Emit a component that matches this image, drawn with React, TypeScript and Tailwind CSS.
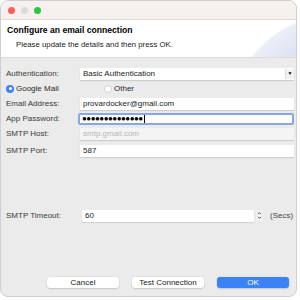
import { clsx } from 'clsx';

const font = "font-['Liberation_Sans','Helvetica',Arial,sans-serif]";

const Row = ({ label, children, className }: { label: string; children: React.ReactNode; className?: string }) => (
    <div className={clsx('h-[15px] flex items-center', className)}>
        <span className="w-[79px] pl-[5px] text-[8px] text-[#3a3a3a] whitespace-nowrap">{label}</span>
        {children}
    </div>
);

const Field = ({ value, disabled, focused }: { value: string; disabled?: boolean; focused?: boolean }) => (
    <div
        className={clsx(
            'h-[12px] flex items-center text-[8px] whitespace-nowrap overflow-hidden',
            focused
                ? 'ml-[-2px] w-[216px] border-2 border-[#86a6ea] rounded-[2px] bg-white px-[2px] text-black tracking-[-0.5px]'
                : 'w-[214px] px-[3px] shadow-[0_1px_1px_rgba(0,0,0,0.12)]',
            disabled ? 'bg-[#f4f4f4] text-[#b4b4b4]' : !focused && 'bg-white text-[#222]'
        )}
    >
        {value}
        {focused && <span className="w-px h-[9px] bg-black ml-px" />}
    </div>
);

const Radio = ({ label, checked }: { label: string; checked?: boolean }) => (
    <div className="flex items-center gap-[2px]">
        <span
            className={clsx(
                'w-[8px] h-[8px] rounded-full flex items-center justify-center',
                checked ? 'bg-[#3d82f6]' : 'bg-white border border-[#d0d0d0]'
            )}
        >
            {checked && <span className="w-[3px] h-[3px] rounded-full bg-white" />}
        </span>
        <span className="text-[8px] text-[#2a2a2a]">{label}</span>
    </div>
);

const App = () => {
    return (
        <div className={clsx('w-[300px] h-[300px] bg-white', font)}>
            <div className="w-[297px] h-[297px] rounded-[8px] border border-[#cfcfcf] overflow-hidden flex flex-col bg-[#ebebeb]">
                {/* Title bar */}
                <div className="h-[19px] flex-shrink-0 bg-[#f6f1ee] border-b border-[#dedad7] flex items-center gap-[6px] pl-[7px]">
                    <span className="w-[7px] h-[7px] rounded-full bg-[#fe5f57]" />
                    <span className="w-[7px] h-[7px] rounded-full bg-[#dcdcdc]" />
                    <span className="w-[7px] h-[7px] rounded-full bg-[#29c840]" />
                </div>

                {/* Header */}
                <div className="h-[38px] flex-shrink-0 bg-[radial-gradient(circle_at_335px_100px,#c9d2ee_0px,#dbe1f3_75px,#eceff8_104px,#ffffff_106px)] border-b border-[#dcdcdc] pl-[6px] pt-[5px]">
                    <div className="text-[8.6px] font-bold text-black leading-[11px]">Configure an email connection</div>
                    <div className="text-[7.8px] text-[#222] pl-[9px] mt-[4px] leading-[10px]">Please update the details and then press OK.</div>
                </div>

                {/* Body */}
                <div className="flex-1 flex flex-col pt-[8px]">
                    <Row label="Authentication:">
                        <div className="w-[214px] h-[12px] bg-white flex items-center justify-between pl-[3px] shadow-[0_1px_1px_rgba(0,0,0,0.12)]">
                            <span className="text-[8px] text-[#222]">Basic Authentication</span>
                            <span className="w-[9px] h-[10px] bg-[#f2f2f2] border-l border-[#dadada] flex items-center justify-center text-[5px] text-black">▼</span>
                        </div>
                    </Row>
                    <div className="h-[15px] flex items-center pl-[5px]">
                        <div className="w-[98px]">
                            <Radio label="Google Mail" checked />
                        </div>
                        <Radio label="Other" />
                    </div>
                    <Row label="Email Address:">
                        <Field value="provardocker@gmail.com" />
                    </Row>
                    <Row label="App Password:">
                        <Field value="●●●●●●●●●●●●●●" focused />
                    </Row>
                    <Row label="SMTP Host:">
                        <Field value="smtp.gmail.com" disabled />
                    </Row>
                    <Row label="SMTP Port:" className="mt-[2px]">
                        <Field value="587" />
                    </Row>

                    <div className="h-[15px] flex items-center mt-[50px]">
                        <span className="w-[81px] pl-[5px] text-[8px] text-[#3a3a3a]">SMTP Timeout:</span>
                        <div className="w-[172px] h-[12px] bg-white flex items-center px-[3px] text-[8px] text-[#222] shadow-[0_1px_1px_rgba(0,0,0,0.1)]">60</div>
                        <div className="ml-[2px] w-[7px] h-[11px] bg-[#f4f4f4] rounded-[2px] flex items-center justify-center">
                            <svg width="5" height="9" viewBox="0 0 5 9" fill="none" stroke="#444" strokeWidth="0.9">
                                <path d="M1 3.2 L2.5 1.6 L4 3.2" />
                                <path d="M1 5.8 L2.5 7.4 L4 5.8" />
                            </svg>
                        </div>
                        <span className="ml-[7px] text-[8px] text-[#444]">(Secs)</span>
                    </div>

                    {/* Buttons */}
                    <div className="mt-[54px] flex items-center pl-[46px] gap-[13px]">
                        <button className="w-[72px] h-[11px] rounded-[3px] bg-white text-[8px] text-[#222] shadow-[0_0.5px_1.5px_rgba(0,0,0,0.25)] flex items-center justify-center">Cancel</button>
                        <button className="w-[72px] h-[11px] rounded-[3px] bg-white text-[8px] text-[#222] shadow-[0_0.5px_1.5px_rgba(0,0,0,0.25)] flex items-center justify-center">Test Connection</button>
                        <button className="w-[72px] h-[11px] rounded-[3px] bg-[#3b82f7] text-[8px] text-white shadow-[0_0.5px_1.5px_rgba(0,0,0,0.25)] flex items-center justify-center">OK</button>
                    </div>
                </div>
            </div>
        </div>
    );
};

export default App;
